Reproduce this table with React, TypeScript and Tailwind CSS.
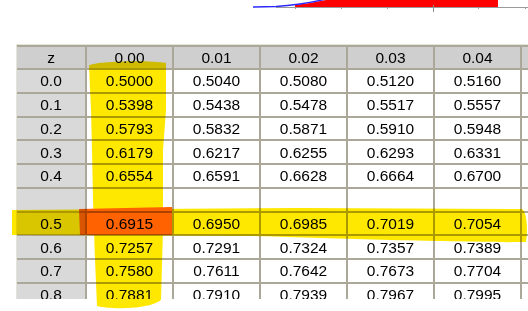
import React from 'react'

const cols = ['0.00', '0.01', '0.02', '0.03', '0.04', '']

// last column is cut off by the window edge, so its values never show
const rows: { z: string; v: string[] }[] = [
  { z: '0.0', v: ['0.5000', '0.5040', '0.5080', '0.5120', '0.5160', ''] },
  { z: '0.1', v: ['0.5398', '0.5438', '0.5478', '0.5517', '0.5557', ''] },
  { z: '0.2', v: ['0.5793', '0.5832', '0.5871', '0.5910', '0.5948', ''] },
  { z: '0.3', v: ['0.6179', '0.6217', '0.6255', '0.6293', '0.6331', ''] },
  { z: '0.4', v: ['0.6554', '0.6591', '0.6628', '0.6664', '0.6700', ''] },
  { z: '', v: ['', '', '', '', '', ''] },
  { z: '0.5', v: ['0.6915', '0.6950', '0.6985', '0.7019', '0.7054', ''] },
  { z: '0.6', v: ['0.7257', '0.7291', '0.7324', '0.7357', '0.7389', ''] },
  { z: '0.7', v: ['0.7580', '0.7611', '0.7642', '0.7673', '0.7704', ''] },
  { z: '0.8', v: ['0.7881', '0.7910', '0.7939', '0.7967', '0.7995', ''] },
]

function Curve() {
  // little normal-curve preview cut off at the top of the page
  return (
    <svg width="528" height="14" className="block">
      <path d="M295,7 L295,5 C305,4 315,2 326,0 L498,0 L498,7 Z" fill="#ff0000" />
      <line x1="276" y1="7.5" x2="528" y2="7.5" stroke="#9a9a9a" strokeWidth="1" />
      {[295, 341, 387, 478, 525].map((x) => (
        <line key={x} x1={x + 0.5} y1="7" x2={x + 0.5} y2="9" stroke="#9a9a9a" strokeWidth="1" />
      ))}
      <line x1="433.5" y1="5" x2="433.5" y2="12" stroke="#8a8a8a" strokeWidth="1" />
      <path
        d="M253,7 L276,6.5 C285,6 293,5 300,4 C310,2.5 318,1 326,-1"
        fill="none"
        stroke="#2a2aff"
        strokeWidth="1.4"
      />
    </svg>
  )
}

function Highlights() {
  return (
    <svg width="528" height="311" className="absolute inset-0 pointer-events-none mix-blend-multiply">
      {/* marker on column 0.00 */}
      <path
        d="M89,66 C92,61 150,60 166,63 L166,110 L163,150 L163,230 L161,300 C150,309 112,310 97,306 L95,260 L93,200 L92,150 L91,110 Z"
        fill="#ffe800"
      />
      {/* marker on row 0.5 */}
      <path
        d="M12,210 L300,208 L522,209 C527,212 528,230 526,242 C470,243 320,238 250,236 L12,235 Z"
        fill="#ffe800"
      />
      {/* box around 0.6915 */}
      <path d="M79,209 L172,207 L172,235 L80,235 Z" fill="#ff6200" />
    </svg>
  )
}

export default function App() {
  return (
    <div className="relative w-[528px] h-[311px] overflow-hidden bg-white font-['Liberation_Sans',Arial,sans-serif] text-[15.5px] text-black">
      <div className="h-[44px]">
        <Curve />
      </div>

      <div className="ml-[16px] h-[255px] overflow-hidden border-t border-l border-[#e6e3d8] bg-[#aca899] pt-[2px]">
        <div className="grid grid-cols-[68px_85px_85px_85px_85px_85px_85px] grid-rows-[21px_repeat(10,21.75px)] gap-[2px] w-max">
          <div className="flex items-center justify-center bg-[#cfcfcf]">z</div>
          {cols.map((c, k) => (
            <div key={k} className="flex items-center justify-center bg-[#cfcfcf]">{c}</div>
          ))}
          {rows.map((r, i) => (
            <React.Fragment key={i}>
              <div className="flex items-center justify-center bg-[#d9d9d9]">{r.z}</div>
              {r.v.map((v, j) => (
                <div key={j} className="flex items-center justify-center bg-white">{v}</div>
              ))}
            </React.Fragment>
          ))}
        </div>
      </div>

      <Highlights />
    </div>
  )
}
